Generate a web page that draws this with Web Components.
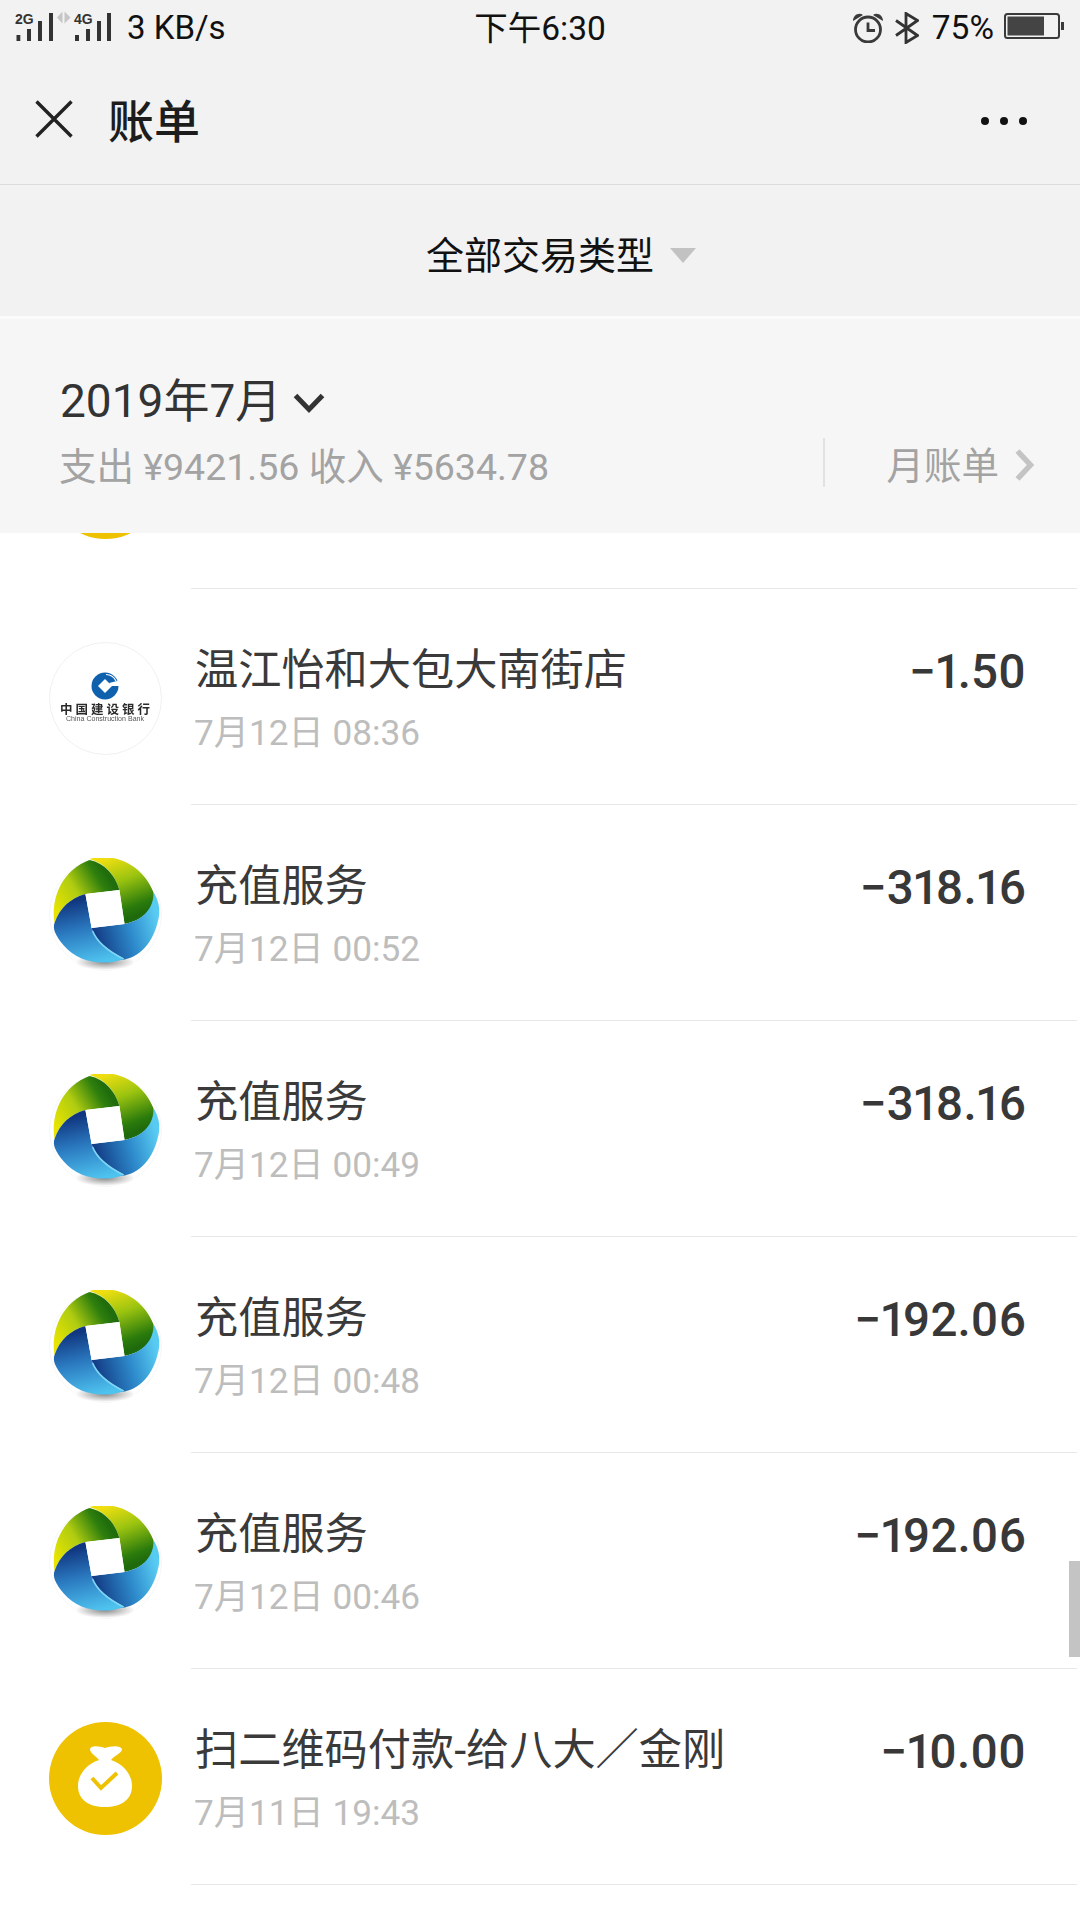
<!DOCTYPE html>
<html lang="zh-CN"><head><meta charset="utf-8">
<style>
html,body{margin:0;padding:0;background:#fff}
body{width:1080px;height:1920px;overflow:hidden;font-family:"Roboto","Noto Sans CJK SC",sans-serif}
bill-list{height:1387px}
</style></head><body>
<status-bar></status-bar>
<nav-bar title="账单"></nav-bar>
<filter-bar label="全部交易类型"></filter-bar>
<month-summary month="2019年7月" totals="支出 ¥9421.56 收入 ¥5634.78" link="月账单"></month-summary>
<bill-list>
  <bill-row icon="bag"></bill-row>
  <bill-row icon="ccb" title="温江怡和大包大南街店" date="7月12日 08:36" amount="−1.50"></bill-row>
  <bill-row icon="swirl" title="充值服务" date="7月12日 00:52" amount="−318.16"></bill-row>
  <bill-row icon="swirl" title="充值服务" date="7月12日 00:49" amount="−318.16"></bill-row>
  <bill-row icon="swirl" title="充值服务" date="7月12日 00:48" amount="−192.06"></bill-row>
  <bill-row icon="swirl" title="充值服务" date="7月12日 00:46" amount="−192.06"></bill-row>
  <bill-row icon="bag" title="扫二维码付款-给八大／金刚" date="7月11日 19:43" amount="−10.00"></bill-row>
</bill-list>
<script>
const def=(n,html)=>customElements.define(n,class extends HTMLElement{
  connectedCallback(){ if(this.shadowRoot)return; const r=this.attachShadow({mode:'open'}); r.innerHTML=html(a=>this.getAttribute(a)||''); }
});
def('status-bar',()=>`<style>
:host{display:flex;height:50px;background:#f2f2f2;align-items:center;color:#111;position:relative}
.l{display:flex;align-items:center;flex:1}
.t{position:absolute;left:0;right:0;text-align:center;top:7px;line-height:44px;font-size:33.5px}
.r{display:flex;align-items:center;padding-right:16px}
svg{display:block;flex:none}
.sp{line-height:44px;font-size:33px;margin-top:6px}
.pct{line-height:44px;margin:6px 10px 0 13px;font-size:33.5px}
</style>
<div class="l">
<svg width="127" height="50" viewBox="0 0 127 50">
 <text x="15" y="23.5" font-family="Liberation Sans" font-weight="700" font-size="14" fill="#333">2G</text>
 <g fill="#333"><rect x="16.500" y="35" width="3.800" height="6"/><rect x="27" y="29" width="4" height="12"/><rect x="38" y="21" width="4" height="20"/><rect x="49" y="13" width="4" height="28"/></g>
 <path d="M57 17.500l5.500-6v12zM64.500 11.500l6 6-6 6z" fill="#c6c6c6"/>
 <text x="74" y="23.5" font-family="Liberation Sans" font-weight="700" font-size="14" fill="#333">4G</text>
 <g fill="#333"><rect x="75" y="35" width="4" height="6"/><rect x="86" y="29" width="4" height="12"/><rect x="97" y="21" width="4" height="20"/><rect x="107" y="13" width="4" height="28"/></g>
</svg><span class="sp">3 KB/s</span></div>
<div class="t">下午6:30</div>
<div class="r">
<svg width="30" height="30" viewBox="0 0 30 30" style="margin:5px -1px 0 0"><circle cx="15" cy="16.500" r="12.500" fill="none" stroke="#3a3a3a" stroke-width="2.800"/><path d="M15 9.500v8h7" fill="none" stroke="#3a3a3a" stroke-width="2.800"/><path d="M0 8C0 2 6-1 10 2zM30 8C30 2 24-1 20 2z" fill="#3a3a3a"/></svg>
<svg width="24" height="32" viewBox="0 0 24 32" style="margin:5px 0 0 13px"><path d="M1 8.500L22.500 23.500 11 30.500V1.500L22.500 8.500 1 23.500" fill="none" stroke="#333" stroke-width="2.800"/></svg>
<span class="pct">75%</span>
<svg width="60" height="26" viewBox="0 0 60 26" style="margin-top:2px"><rect x="1" y="1" width="54" height="24" rx="2.500" fill="none" stroke="#3a3a3a" stroke-width="2"/><rect x="3.500" y="3.500" width="36.500" height="19" fill="#444"/><rect x="57" y="9" width="3" height="8" fill="#3a3a3a"/></svg>
</div>`);
def('nav-bar',g=>`<style>
:host{display:flex;box-sizing:border-box;height:135px;background:#f2f2f2;align-items:center;border-bottom:1.5px solid #dcdcdc;padding:9.5px 52px 0 35px}
svg{display:block;flex:none}
.x{margin-top:-5px}
.d{margin-top:-2px}
.t{margin-left:35px;font-size:46px;font-weight:500;color:#1c1c1c;flex:1;line-height:60px}
</style>
<svg class="x" width="38" height="38" viewBox="0 0 38 38"><path d="M1.500 1.500L36.500 36.500M36.500 1.500L1.500 36.500" stroke="#222" stroke-width="3.400"/></svg>
<div class="t">${g('title')}</div>
<svg class="d" width="48" height="10" viewBox="0 0 48 10"><circle cx="5" cy="5" r="4" fill="#111"/><circle cx="24" cy="5" r="4" fill="#111"/><circle cx="43" cy="5" r="4" fill="#111"/></svg>`);
def('filter-bar',g=>`<style>
:host{display:flex;box-sizing:border-box;height:134px;background:#f2f2f2;justify-content:center;align-items:center;padding:10px 0 0 42px;gap:16px;border-bottom:3px solid #fbfbfb;font-size:38px;color:#111}
span{margin-top:-7px}
</style><span>${g('label')}</span><svg width="26" height="15" viewBox="0 0 26 15"><path d="M0 0H26L13 15z" fill="#c2c2c2"/></svg>`);
def('month-summary',g=>`<style>
:host{display:block;box-sizing:border-box;height:214px;background:#f6f6f6;padding:0 46px 0 59px;position:relative;z-index:2}
.m{display:flex;align-items:center;padding:53px 0 0 1px;height:58px;font-size:46px;color:#333;line-height:58px;margin-bottom:-1px}
.m svg{margin-left:12px;margin-top:3px}
.b{display:flex;align-items:center;margin-top:10px;height:50px}
.tot{flex:1;font-size:37.5px;color:#a3a3a3;line-height:50px;padding-top:6px}
.div{width:2px;height:49px;background:#e2e2e2;margin-right:62px;margin-top:-3px}
.lk{font-size:37.5px;color:#a3a3a3;line-height:50px;margin-top:4px}
.b svg{margin-left:15px;margin-top:2px}
</style>
<div class="m"><span>${g('month')}</span><svg width="32" height="22" viewBox="0 0 32 22"><path d="M2.500 3.500L16 17.500 29.500 3.500" fill="none" stroke="#333" stroke-width="5"/></svg></div>
<div class="b"><span class="tot">${g('totals')}</span><span class="div"></span><span class="lk">${g('link')}</span><svg width="20" height="32" viewBox="0 0 20 32"><path d="M3.500 2L16.500 16 3.500 30" fill="none" stroke="#c4c4c4" stroke-width="5.500"/></svg></div>`);
def('bill-list',()=>`<style>
:host{display:block;overflow:hidden;background:#fff;position:relative}
.in{margin-top:-160px}
.sb{position:absolute;right:0;top:1028px;width:11px;height:96px;background:#c4c4c4}
</style><div class="in"><slot></slot></div><div class="sb"></div>`);
const bag=`<svg width="113" height="113" viewBox="0 0 113 113"><circle cx="56.500" cy="56.500" r="56.500" fill="#eec200"/>
<path d="M41 27C42 23 50 24 56 26C62 24 71 23 73 27C73 31 66 33 62 38C74 42 83 52 83 64C83 78 72 85 56 85C40 85 29 78 29 64C29 52 38 42 50 38C46 33 41 31 41 27Z" fill="#fff"/>
<path d="M43 56l9 10 16-15" fill="none" stroke="#eec200" stroke-width="4"/></svg>`;
const ccb=`<svg width="113" height="113" viewBox="0 0 113 113"><circle cx="56.500" cy="56.500" r="56" fill="#fff" stroke="#f0f0f0"/>
<circle cx="56" cy="44" r="13.500" fill="#0f60ad"/>
<path d="M56 37l7 7-7 7-7-7z" fill="#fff"/>
<path d="M60 41l12-3v6H62z" fill="#fff"/>
<path d="M57 32.500A11.500 11.500 0 0 1 67 39" fill="none" stroke="#fff" stroke-width="1.200"/>
<text x="11" y="71.500" textLength="90" lengthAdjust="spacing" font-family="Noto Sans CJK SC" font-weight="700" font-size="12.500" fill="#2a2a2a">中国建设银行</text>
<text x="17" y="79" textLength="78" lengthAdjust="spacingAndGlyphs" font-family="Liberation Sans" font-size="7" fill="#555">China Construction Bank</text></svg>`;
const swirl=`<svg width="113" height="113" viewBox="0 0 113 113"><defs>
<radialGradient id="sh" cx=".5" cy=".5" r=".5"><stop offset="0" stop-color="#888"/><stop offset="1" stop-color="#fff"/></radialGradient>
<linearGradient id="a" gradientUnits="userSpaceOnUse" x1="10" y1="58" x2="62" y2="26"><stop offset="0" stop-color="#e8e400"/><stop offset=".45" stop-color="#b0cc10"/><stop offset=".85" stop-color="#2f7f0e"/><stop offset="1" stop-color="#1f6d0c"/></linearGradient>
<linearGradient id="b" gradientUnits="userSpaceOnUse" x1="56" y1="4" x2="78" y2="62"><stop offset="0" stop-color="#efdf10"/><stop offset=".4" stop-color="#9cc410"/><stop offset=".85" stop-color="#2a7a0c"/><stop offset="1" stop-color="#1f6a0c"/></linearGradient>
<linearGradient id="c" gradientUnits="userSpaceOnUse" x1="36" y1="42" x2="50" y2="104"><stop offset="0" stop-color="#10367f"/><stop offset=".45" stop-color="#2a78bf"/><stop offset="1" stop-color="#4ec3ef"/></linearGradient>
<linearGradient id="d" gradientUnits="userSpaceOnUse" x1="48" y1="78" x2="106" y2="62"><stop offset="0" stop-color="#143f88"/><stop offset=".55" stop-color="#2e8bcc"/><stop offset="1" stop-color="#58cbf2"/></linearGradient>
</defs>
<circle cx="56.500" cy="56.500" r="56" fill="#fff" stroke="#f6f6f6"/>
<ellipse cx="56" cy="104" rx="30" ry="8" fill="url(#sh)"/>
<g transform="translate(57 51.500) scale(1.03) translate(-57 -53)">
<path d="M41 4C62-3 92 8 103 36C108 50 92 64 75 67L70 34C66 20 56 8 41 4Z" fill="url(#b)"/>
<path d="M7 66C3 40 16 14 41 5C56 8 66 20 70 34L37 38C22 42 12 52 7 66Z" fill="url(#a)"/>
<path d="M43 71L75 67C92 64 104 52 103 36C108 44 110 52 108 62C103 85 90 100 72 102C58 96 47 84 43 71Z" fill="url(#d)"/>
<path d="M37 38L43 71C46 82 58 92 75 101C55 108 30 105 16 88C8 78 5 72 7 66C12 52 22 42 37 38Z" fill="url(#c)"/>
<path d="M44 74C48 84 60 94 74 101" fill="none" stroke="#7fd6f5" stroke-width="1.500"/>
<path d="M37 38L70 34 75 67 43 71z" fill="#fff"/>
</g>
</svg>`;
def('bill-row',g=>`<style>
:host{display:flex;box-sizing:border-box;height:216px;background:#fff}
.ic{margin:53px 0 0 49px;width:113px;height:113px;flex:none}
.ic svg{display:block}
.ic.soft{filter:blur(.5px)}
.main{flex:1;margin:0 3px 0 29px;border-bottom:1.5px solid #e8e8e8;display:flex;padding:0 51px 0 0;box-sizing:border-box}
.tx{flex:1;padding-left:4px}
.ti{font-size:43.2px;line-height:56px;color:#3a3a3a;margin-top:54px}
.da{font-size:35.2px;line-height:48px;color:#bdbdbd;margin:10px 0 0 -1px}
.am{font-size:47.5px;line-height:56px;font-weight:500;color:#383838;margin-top:55px;font-variant-numeric:proportional-nums}
</style>
<div class="ic soft">${({bag,ccb,swirl})[g('icon')]}</div>
<div class="main"><div class="tx">${g('title')?`<div class="ti">${g('title')}</div><div class="da">${g('date')}</div>`:''}</div>${g('amount')?`<div class="am">${g('amount')}</div>`:''}</div>`);
</script>
</body></html>
